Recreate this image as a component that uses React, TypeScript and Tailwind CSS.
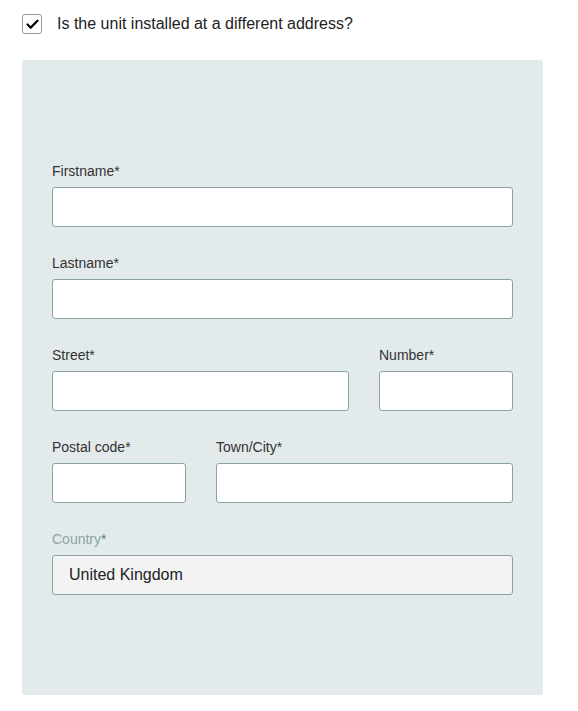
import { Check } from 'lucide-react'

function Field({ label, className = '', muted = false, value }: { label: string; className?: string; muted?: boolean; value?: string }) {
  return (
    <div className={`flex flex-col ${className}`}>
      <label className={`text-[14px] leading-4 mb-2 ${muted ? 'text-[#8ba6a4]' : 'text-[#333]'}`}>
        {label}
        {muted && <span className="text-[#5f7d7b]">*</span>}
      </label>
      {value !== undefined ? (
        <div className="h-10 rounded-[3px] border border-[#8aa3a3] bg-[#f3f3f3] px-4 flex items-center text-[16px] text-[#222]">
          {value}
        </div>
      ) : (
        <input className="h-10 w-full rounded-[3px] border border-[#8aa3a3] bg-white px-3 outline-none" />
      )}
    </div>
  )
}

export default function App() {
  return (
    <div className="min-h-[711px] bg-white pt-[14px] px-[22px] pb-4" style={{ fontFamily: '"Liberation Sans", Arial, sans-serif' }}>
      <div className="flex items-center gap-[15px] h-5">
        <span className="flex h-5 w-5 items-center justify-center rounded-[3px] border border-[#8a9c9c] bg-white">
          <Check className="h-[15px] w-[15px] text-black" strokeWidth={3.5} />
        </span>
        <span className="text-[16px] text-[#222]">Is the unit installed at a different address?</span>
      </div>

      <div className="mt-[26px] w-[521px] rounded-[3px] bg-[#e3eaeb] px-[30px] pt-[103px] pb-[100px]">
        <div className="flex flex-col gap-7">
          <Field label="Firstname*" />
          <Field label="Lastname*" />
          <div className="flex gap-[30px]">
            <Field label="Street*" className="w-[297px]" />
            <Field label="Number*" className="w-[134px]" />
          </div>
          <div className="flex gap-[30px]">
            <Field label="Postal code*" className="w-[134px]" />
            <Field label="Town/City*" className="w-[297px]" />
          </div>
          <Field label="Country" muted value="United Kingdom" />
        </div>
      </div>
    </div>
  )
}
